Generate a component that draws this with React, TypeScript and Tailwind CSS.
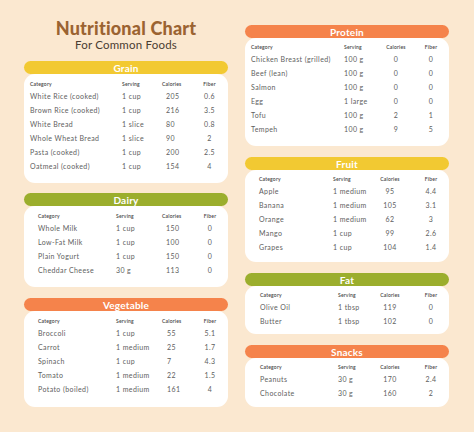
import React from "react";

type Row = [string, string, string, string];

type Section = {
  title: string;
  pill: string;
  pad: string; // card padding
  cols: string; // grid template
  calAlign: string; // calories column alignment
  rows: Row[];
};

const grain: Section = {
  title: "Grain",
  pill: "bg-[#f2c932]",
  pad: "pl-[6px] pt-[6px] pb-[10px]",
  cols: "grid-cols-[92px_40px_34px_27px]",
  calAlign: "pl-[4px]",
  rows: [
    ["White Rice (cooked)", "1 cup", "205", "0.6"],
    ["Brown Rice (cooked)", "1 cup", "216", "3.5"],
    ["White Bread", "1 slice", "80", "0.8"],
    ["Whole Wheat Bread", "1 slice", "90", "2"],
    ["Pasta (cooked)", "1 cup", "200", "2.5"],
    ["Oatmeal (cooked)", "1 cup", "154", "4"],
  ],
};

const dairy: Section = {
  title: "Dairy",
  pill: "bg-[#9bae2d]",
  pad: "pl-[14px] pt-[6px] pb-[10px]",
  cols: "grid-cols-[78px_46px_34px_28px]",
  calAlign: "pl-[4px]",
  rows: [
    ["Whole Milk", "1 cup", "150", "0"],
    ["Low-Fat Milk", "1 cup", "100", "0"],
    ["Plain Yogurt", "1 cup", "150", "0"],
    ["Cheddar Cheese", "30 g", "113", "0"],
  ],
};

const vegetable: Section = {
  title: "Vegetable",
  pill: "bg-[#f5834b]",
  pad: "pl-[14px] pt-[6px] pb-[11px]",
  cols: "grid-cols-[78px_46px_34px_28px]",
  calAlign: "pl-[5px]",
  rows: [
    ["Broccoli", "1 cup", "55", "5.1"],
    ["Carrot", "1 medium", "25", "1.7"],
    ["Spinach", "1 cup", "7", "4.3"],
    ["Tomato", "1 medium", "22", "1.5"],
    ["Potato (boiled)", "1 medium", "161", "4"],
  ],
};

const protein: Section = {
  title: "Protein",
  pill: "bg-[#f5834b]",
  pad: "pl-[6px] pt-[5px] pb-[10px]",
  cols: "grid-cols-[93px_31px_42px_28px]",
  calAlign: "text-center",
  rows: [
    ["Chicken Breast (grilled)", "100 g", "0", "0"],
    ["Beef (lean)", "100 g", "0", "0"],
    ["Salmon", "100 g", "0", "0"],
    ["Egg", "1 large", "0", "0"],
    ["Tofu", "100 g", "2", "1"],
    ["Tempeh", "100 g", "9", "5"],
  ],
};

const fruit: Section = {
  title: "Fruit",
  pill: "bg-[#f2c932]",
  pad: "pl-[14px] pt-[5px] pb-[8px]",
  cols: "grid-cols-[74px_34px_46px_36px]",
  calAlign: "text-center",
  rows: [
    ["Apple", "1 medium", "95", "4.4"],
    ["Banana", "1 medium", "105", "3.1"],
    ["Orange", "1 medium", "62", "3"],
    ["Mango", "1 cup", "99", "2.6"],
    ["Grapes", "1 cup", "104", "1.4"],
  ],
};

const fat: Section = {
  title: "Fat",
  pill: "bg-[#9bae2d]",
  pad: "pl-[15px] pt-[5px] pb-[6px]",
  cols: "grid-cols-[78px_29px_46px_36px]",
  calAlign: "text-center",
  rows: [
    ["Olive Oil", "1 tbsp", "119", "0"],
    ["Butter", "1 tbsp", "102", "0"],
  ],
};

const snacks: Section = {
  title: "Snacks",
  pill: "bg-[#f5834b]",
  pad: "pl-[15px] pt-[5px] pb-[7px]",
  cols: "grid-cols-[78px_29px_46px_36px]",
  calAlign: "text-center",
  rows: [
    ["Peanuts", "30 g", "170", "2.4"],
    ["Chocolate", "30 g", "160", "2"],
  ],
};

const FoodCard = ({ s }: { s: Section }) => (
  <div className="flex flex-col">
    <div className={`h-[13px] rounded-full ${s.pill} flex items-center justify-center`}>
      <span className="text-white text-[10px] font-bold leading-none tracking-[0.2px]">{s.title}</span>
    </div>
    <div className={`bg-white rounded-[11px] ${s.pad}`}>
      <div className={`grid ${s.cols} h-[9px] items-center text-[5px] leading-none text-[#444] font-semibold tracking-[0.2px]`}>
        <span>Category</span>
        <span>Serving</span>
        <span className={s.calAlign === "text-center" ? "text-center" : ""}>Calories</span>
        <span className="text-center">Fiber</span>
      </div>
      {s.rows.map((r, i) => (
        <div key={i} className={`grid ${s.cols} h-[14px] items-center text-[7px] leading-none text-[#606060] tracking-[0.4px] whitespace-nowrap`}>
          <span>{r[0]}</span>
          <span>{r[1]}</span>
          <span className={s.calAlign}>{r[2]}</span>
          <span className="text-center">{r[3]}</span>
        </div>
      ))}
    </div>
  </div>
);

export default function App() {
  return (
    <div className="w-[474px] h-[432px] bg-[#fbe8d0] flex gap-[17px] pl-[24px] overflow-hidden" style={{ fontFamily: "Lato, 'Open Sans', sans-serif" }}>
      {/* left column */}
      <div className="w-[204px] flex flex-col">
        <div className="h-[61px] flex flex-col items-center pt-[19px]">
          <h1 className="text-[18px] leading-[18px] font-black text-[#9b6331] tracking-[0.2px]">Nutritional Chart</h1>
          <p className="text-[11.5px] leading-[13px] text-[#4a3b31] mt-[1px] tracking-[0.2px]">For Common Foods</p>
        </div>
        <div className="flex flex-col gap-[10px]">
          <FoodCard s={grain} />
          <div className="flex flex-col gap-[11px]">
            <FoodCard s={dairy} />
            <FoodCard s={vegetable} />
          </div>
        </div>
      </div>

      {/* right column */}
      <div className="w-[204px] flex flex-col gap-[11px] pt-[25px]">
        <FoodCard s={protein} />
        <FoodCard s={fruit} />
        <FoodCard s={fat} />
        <FoodCard s={snacks} />
      </div>
    </div>
  );
}
